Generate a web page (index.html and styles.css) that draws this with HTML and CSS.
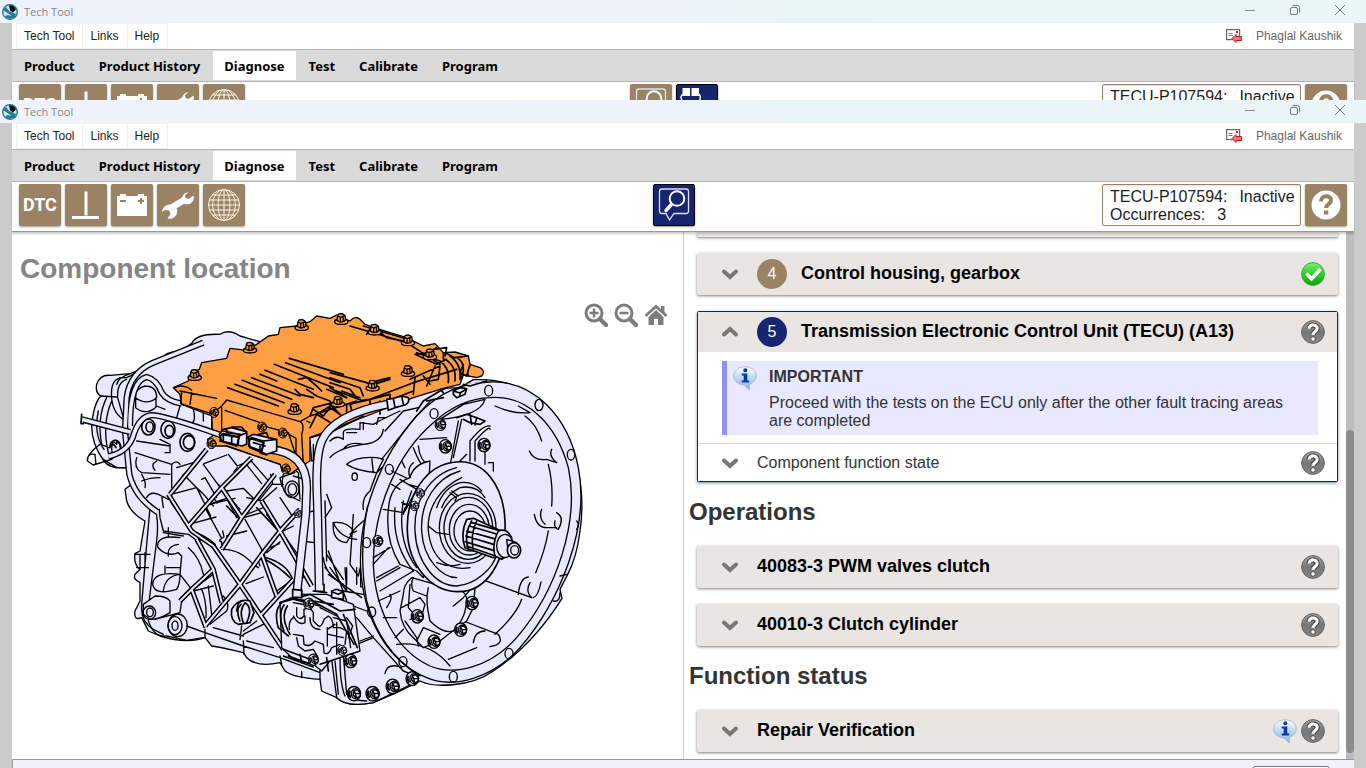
FILE: index.html
```html
<!DOCTYPE html>
<html lang="en">
<head>
<meta charset="utf-8">
<title>Tech Tool</title>
<link rel="stylesheet" href="styles.css">
</head>
<body>
<svg class="defs" aria-hidden="true">
  <defs>
    <linearGradient id="grey" x1="0" y1="0" x2="0" y2="1"><stop offset="0" stop-color="#a4a4a4"/><stop offset=".5" stop-color="#777"/><stop offset="1" stop-color="#858585"/></linearGradient>
    <linearGradient id="green" x1="0" y1="0" x2="0" y2="1"><stop offset="0" stop-color="#7df06a"/><stop offset=".5" stop-color="#2fd02a"/><stop offset="1" stop-color="#12a012"/></linearGradient>
    <linearGradient id="blue" x1="0" y1="0" x2="0" y2="1"><stop offset="0" stop-color="#fdfeff"/><stop offset=".55" stop-color="#b5d2f5"/><stop offset="1" stop-color="#8fb4e4"/></linearGradient>
  </defs>
  <symbol id="logo" viewBox="0 0 16 16"><circle cx="8" cy="8" r="7.3" fill="#cfe3ea" stroke="#1d6f86" stroke-width="1.3"/><path d="M1 6 4 3l3 4 7 3-1 3-5 2-5-2 2-2 5 1-6-4z" fill="#247a92"/><path d="M7 1.5c3-1 6 1 7 4l-3 3-3-2z" fill="#07131c"/></symbol>
  <symbol id="min" viewBox="0 0 12 12"><path d="M1 6.500h10" stroke="#888" fill="none"/></symbol>
  <symbol id="max" viewBox="0 0 12 12"><rect x="1.500" y="3.500" width="7" height="7" rx="1.500" fill="none" stroke="#777"/><path d="M3.500 1.500h5a2 2 0 0 1 2 2v5" fill="none" stroke="#777"/></symbol>
  <symbol id="close" viewBox="0 0 12 12"><path d="m1 1 10 10M11 1 1 11" stroke="#777" fill="none"/></symbol>
  <symbol id="mail" viewBox="0 0 16 14"><rect x=".6" y=".6" width="13" height="10" fill="#fff" stroke="#666" stroke-width="1.200"/><path d="M2.500 4.500h4M2.500 6.500h4" stroke="#777"/><path d="M10 2h2v2h-2z" fill="#c22"/><path d="m6 9.500 4-4v2h5.500v4H10v2z" fill="#ff7070" stroke="#d01818"/></symbol>
  <symbol id="ground" viewBox="0 0 42 42"><path d="M19.500 7.500h3v24h-3zM7 32h27v3H7z" fill="#fff"/></symbol>
  <symbol id="battery" viewBox="0 0 42 42"><path d="M6 12h3v-2h6v2h12v-2h6v2h3v20H6z" fill="#fff"/><path d="M9 17h6M27 17h6M30 14v6" stroke="#9a8265" stroke-width="2"/></symbol>
  <symbol id="wrench" viewBox="0 0 42 42"><path d="M14 24 28 15.500" stroke="#fff" stroke-width="6.500"/><path d="M30 8.500a7 7 0 0 0-5 8l3 3.500a7 7 0 0 0 9-6l-.5-2.500-5 3.500-3-1-.5-3 3.500-2.500zM5 28a8 8 0 0 1 11-7l4 4A8 8 0 0 1 12 35l-1.500-.5 3-4.500-1.500-3.500-4-.5z" fill="#fff"/></symbol>
  <symbol id="globe" viewBox="0 0 42 42"><g fill="none" stroke="#fff3df" stroke-width="1"><circle cx="21" cy="21" r="15.500"/><ellipse cx="21" cy="21" rx="11.500" ry="15.500"/><ellipse cx="21" cy="21" rx="6" ry="15.500"/><path d="M21 5.500v31M5.500 21h31M6.500 16h29M6.500 26h29M9.500 11h23M9.500 31h23"/></g></symbol>
  <symbol id="inspect" viewBox="0 0 42 42"><path d="M9 5h24q2.500 0 2.500 2.500V27q0 2.500-2.500 2.500H21L16.500 36 13 29.500H9Q6.500 29.500 6.500 27V7.500Q6.500 5 9 5z" fill="none" stroke="#dfe1f2" stroke-width="1.300"/><circle cx="24" cy="14.500" r="7.300" fill="none" stroke="#fff" stroke-width="2"/><path d="m18 21-5 5.500" stroke="#fff" stroke-width="3.500" stroke-linecap="round"/></symbol>
  <symbol id="parts" viewBox="0 0 42 42"><path d="M6.500 4H14v8H6.500zM15.500 4H23v8h-7.500z" fill="#fff"/><path d="M7 10q-3 2-1.500 5Q6 20 9 20h12q3 0 3-5 1-3-1-5" fill="none" stroke="#fff" stroke-width="1.500"/></symbol>
  <symbol id="helpbig" viewBox="0 0 42 42"><circle cx="21" cy="21" r="14.500" fill="#fff"/><path d="M16 17.500c0-7 10.500-6.500 10-1 0 4-5 3.500-5 7.500" fill="none" stroke="#9a8265" stroke-width="4"/><path d="M18.800 26.500h4.500v4h-4.500z" fill="#9a8265"/></symbol>
  <symbol id="help" viewBox="0 0 24 24"><circle cx="12" cy="12" r="11.400" fill="url(#grey)" stroke="#666"/><path d="M8 8.800C8 3.500 16.500 4 16.200 8.500 16 11.500 12 11.500 12 15" fill="none" stroke="#333" stroke-width="5"/><path d="M8 8.800C8 3.500 16.500 4 16.200 8.500 16 11.500 12 11.500 12 15" fill="none" stroke="#fff" stroke-width="3.200"/><circle cx="12" cy="19" r="2.200" fill="#fff" stroke="#333" stroke-width=".7"/></symbol>
  <symbol id="ok" viewBox="0 0 24 24"><circle cx="12" cy="12" r="11.400" fill="url(#green)" stroke="#2b9c2b" stroke-width=".8"/><path d="m5.500 11.500 5 5.500 9-10" fill="none" stroke="#fff" stroke-width="3.500"/></symbol>
  <symbol id="info" viewBox="0 0 24 24"><path d="M12 .8c6.500 0 11.300 4 11.300 9 0 4-3 7.200-7 8.400V24l-5-5C5 18.700.7 14.800.7 10 .7 5 5.500.8 12 .8z" fill="url(#blue)" stroke="#9aaabd" stroke-width=".7"/><circle cx="12.300" cy="4.200" r="2" fill="#0b3a9c"/><path d="M8.700 7.500h5.600v7h1.900v2H8.700v-2h2v-5h-2z" fill="#0b3a9c"/></symbol>
  <symbol id="chev" viewBox="0 0 16 16"><path d="m2 5.500 6 5.500 6-5.500" fill="none" stroke="#777" stroke-width="4" stroke-linecap="round"/></symbol>
  <symbol id="zoomin" viewBox="0 0 24 24"><circle cx="10" cy="10" r="8" fill="none" stroke="#7d7d7d" stroke-width="3"/><path d="m16 16 6 6" stroke="#7d7d7d" stroke-width="4.500" stroke-linecap="round"/><path d="M5.500 10h9M10 5.500v9" stroke="#7d7d7d" stroke-width="2.500"/></symbol>
  <symbol id="zoomout" viewBox="0 0 24 24"><circle cx="10" cy="10" r="8" fill="none" stroke="#7d7d7d" stroke-width="3"/><path d="m16 16 6 6" stroke="#7d7d7d" stroke-width="4.500" stroke-linecap="round"/><path d="M5.500 10h9" stroke="#7d7d7d" stroke-width="2.500"/></symbol>
  <symbol id="home" viewBox="0 0 24 24"><path d="M1.500 13 12 3.500 22.500 13" fill="none" stroke="#7d7d7d" stroke-width="2.800"/><path d="M17 3h3.500v7L17 7zM4.500 14 12 7l7.500 7v8H14v-6h-4v6H4.500z" fill="#7d7d7d"/></symbol>
  <symbol id="topbolt" viewBox="-24 -24 48 48"><ellipse cy="10" rx="20" ry="8"/><path d="M-11-8-13 6-4 11 8 9 13 3 11-9 2-14-8-13zM-11-7-3-3 11-8M-3-3v13M5-5l1 13"/></symbol>
  <symbol id="sidebolt" viewBox="-24 -24 48 48"><ellipse cx="-2" rx="18" ry="20"/><ellipse cx="3" rx="12" ry="14"/><path d="m-2-9 10-2 8 9-2 10-9 4-9-8zM-2-9l4 9 14-1M2 0l3 12"/><path d="M-14-6q-4 8 2 15" stroke-width="6"/></symbol>
</svg>

<div class="window window-back">
  <header class="titlebar"><svg class="i16"><use href="#logo"/></svg><span class="app-name">Tech Tool</span>
    <div class="win-buttons"><button type="button" aria-label="Minimize"><svg><use href="#min"/></svg></button><button type="button" aria-label="Restore"><svg><use href="#max"/></svg></button><button type="button" aria-label="Close"><svg><use href="#close"/></svg></button></div></header>
  <div class="frame">
    <nav class="menubar"><button type="button">Tech Tool</button><button type="button">Links</button><button type="button">Help</button><div class="user"><svg><use href="#mail"/></svg><span>Phaglal Kaushik</span></div></nav>
    <nav class="tabs"><a href="#">Product</a><a href="#">Product History</a><a href="#" class="active">Diagnose</a><a href="#">Test</a><a href="#">Calibrate</a><a href="#">Program</a></nav>
    <div class="toolbar">
      <div class="tiles"><button type="button" class="tile dtc">DTC</button><button type="button" class="tile" aria-label="Ground"><svg><use href="#ground"/></svg></button><button type="button" class="tile" aria-label="Battery"><svg><use href="#battery"/></svg></button><button type="button" class="tile" aria-label="Tools"><svg><use href="#wrench"/></svg></button><button type="button" class="tile" aria-label="Web"><svg><use href="#globe"/></svg></button></div>
      <div class="tiles middle"><button type="button" class="tile" aria-label="Inspect"><svg><use href="#inspect"/></svg></button><button type="button" class="tile selected" aria-label="Parts"><svg><use href="#parts"/></svg></button></div>
      <div class="tiles end"><div class="fault"><div><span>TECU-P107594:</span><span>Inactive</span></div><div><span>Occurrences:</span><span>3</span></div></div><button type="button" class="tile" aria-label="Help"><svg><use href="#helpbig"/></svg></button></div>
    </div>
  </div>
</div>

<div class="window window-front">
  <header class="titlebar"><svg class="i16"><use href="#logo"/></svg><span class="app-name">Tech Tool</span>
    <div class="win-buttons"><button type="button" aria-label="Minimize"><svg><use href="#min"/></svg></button><button type="button" aria-label="Restore"><svg><use href="#max"/></svg></button><button type="button" aria-label="Close"><svg><use href="#close"/></svg></button></div></header>
  <div class="frame">
    <nav class="menubar"><button type="button">Tech Tool</button><button type="button">Links</button><button type="button">Help</button><div class="user"><svg><use href="#mail"/></svg><span>Phaglal Kaushik</span></div></nav>
    <nav class="tabs"><a href="#">Product</a><a href="#">Product History</a><a href="#" class="active">Diagnose</a><a href="#">Test</a><a href="#">Calibrate</a><a href="#">Program</a></nav>
    <div class="toolbar">
      <div class="tiles"><button type="button" class="tile dtc">DTC</button><button type="button" class="tile" aria-label="Ground"><svg><use href="#ground"/></svg></button><button type="button" class="tile" aria-label="Battery"><svg><use href="#battery"/></svg></button><button type="button" class="tile" aria-label="Tools"><svg><use href="#wrench"/></svg></button><button type="button" class="tile" aria-label="Web"><svg><use href="#globe"/></svg></button></div>
      <div class="tiles middle"><button type="button" class="tile selected" aria-label="Inspect"><svg><use href="#inspect"/></svg></button></div>
      <div class="tiles end"><div class="fault"><div><span>TECU-P107594:</span><span>Inactive</span></div><div><span>Occurrences:</span><span>3</span></div></div><button type="button" class="tile" aria-label="Help"><svg><use href="#helpbig"/></svg></button></div>
    </div>

    <main class="content">
      <section class="location">
        <h1>Component location</h1>
        <div class="stage">
          <svg class="gearbox" viewBox="0 0 1530 1230" role="img" aria-label="Component location">
            <defs>
              <path id="ribs" d="M380 445 270 580M515 470 425 560 325 675M585 520 485 650 425 745M400 805 335 865 300 900M660 625 600 690 545 760 480 850 375 975M640 835 540 945M265 580 335 690 400 735 480 850 540 940 610 1045M425 560 485 650M545 760 590 885M545 600 600 690 695 855M350 715 400 805 425 905M335 865 378 980"/>
              <path id="harness" d="M5 355 150 393M85 466Q140 455 158 410 175 350 210 343 240 338 430 405"/>
              <path id="loop" d="M370 125 220 185Q150 215 140 290L135 390 148 520Q165 590 235 635M150 375Q150 240 200 228 230 235 245 275 260 300 305 308"/>
              <path id="tubes" d="M570 445Q680 455 680 560L677 640 650 880M930 308Q760 340 725 420 705 470 712 600L718 870"/>
            </defs>
            <g class="ink">
              <path class="body" d="M50 250Q60 220 90 223L150 218 205 198 245 175Q255 150 300 152L335 127Q350 97 420 100 445 82 480 105L550 125 900 270 1140 260 1180 236Q1320 230 1405 322C1485 410 1520 560 1500 690Q1490 770 1463 820L1440 865 1446 892Q1360 1030 1240 1110C1170 1160 1060 1160 1020 1140L950 1175 880 1205Q800 1220 770 1190L725 1170 720 1135Q640 1130 615 1110L600 1085Q530 1100 500 1070L490 1055Q430 1040 395 1035L375 1010Q320 1030 240 1005L205 990 185 950Q160 960 165 930L180 900V845Q158 835 165 820L180 805Q160 790 165 758L180 750 195 660Q150 635 140 600L135 565 155 550 140 500Q90 505 72 480 35 430 35 375 40 310 62 285 45 275 50 250Z"/>
              <path d="M150 218Q115 230 110 250M62 285 110 288M95 265Q100 225 140 230L165 218M95 265Q90 330 130 355M140 235Q110 245 113 290L130 350M55 330Q40 400 72 445M80 290Q50 350 65 430M95 300Q65 370 85 455M70 475 110 500H140M110 430Q90 410 90 440L60 430Q20 460 22 480L40 492 95 475 120 450Q125 430 110 420ZM22 480Q22 455 45 460L48 490M100 420Q90 450 100 460"/>
              <path class="heavy" d="M95 425Q105 410 118 425 128 440 115 455M88 440Q98 420 108 440"/>
              <path d="M195 255Q165 262 167 290 200 315 230 290 230 255 195 255M167 290V320Q200 345 228 318V290M230 315 255 325M300 315 290 350M340 325Q350 365 330 370M370 335V360M170 420 270 435M165 455 275 490M170 470Q160 500 185 515L270 520M185 520Q200 545 195 560M185 540Q210 530 240 530M275 490V560M240 415 270 430V455H255M200 590Q210 570 235 580L265 595M230 480Q210 490 225 508M245 585 250 620"/>
              <g class="heavy"><ellipse cx="205" cy="378" rx="20" ry="24"/><ellipse cx="209" cy="378" rx="11" ry="15"/><ellipse cx="264" cy="386" rx="21" ry="26"/><ellipse cx="268" cy="390" rx="13" ry="17"/><ellipse cx="322" cy="424" rx="22" ry="27"/><ellipse cx="327" cy="424" rx="17" ry="20"/></g>
              <path d="M210 620 200 730 185 910Q180 960 220 985L250 1000M222 620Q238 650 230 720L208 895M238 625 240 650 250 690 325 700 345 715 390 722 415 750M195 755V800M180 760V805M165 760H210M170 800H205M265 680V705M250 695 310 705M300 710Q230 700 233 738 260 770 295 755M295 730Q260 735 265 765M300 820Q220 810 218 850 225 885 290 865 300 850 300 820M300 820Q255 825 250 870M255 795V815M260 800H300M295 755 305 765 300 820 335 865 305 900 300 935Q280 940 270 955M190 910 225 885Q260 885 270 900V935Q240 955 210 955L190 940ZM225 955 300 935M325 740Q360 770 370 820M345 860 400 820 430 900M385 855 395 940M365 865Q380 900 378 950M340 870 400 855M430 885Q450 910 440 930L390 970"/>
              <g><ellipse cx="208" cy="935" rx="19" ry="20"/><ellipse cx="210" cy="934" rx="10" ry="13"/><ellipse cx="293" cy="973" rx="29" ry="34"/><ellipse cx="285" cy="974" rx="21" ry="27"/><ellipse cx="285" cy="974" rx="9" ry="14"/></g>
              <path d="M205 958Q220 1010 260 1005L320 1018 370 1010M320 975 375 995 490 1035 600 1070 720 1115M375 985V1010M490 1020 492 1060M600 1065 605 1090M400 980 490 1005M500 1020 580 1040M610 1065 700 1098M665 1112V1130M720 1070V1135M610 1045 660 990M490 1000 550 970M490 990 530 960M485 975 480 1015"/>
              <path d="M275 490Q290 475 300 490M290 500 340 485M372 488 440 462M370 490 418 556M310 520 365 575M310 520 300 540M282 578 350 560 392 645M350 560Q372 578 400 615M365 535 375 530 410 590M410 545 480 625M440 570 490 562 520 592M445 460 472 495 512 478M472 500 462 512M512 478 570 545M495 485 545 548M440 590 470 632M400 605 440 592 470 650M385 608 400 590 412 606M500 640 550 620M590 560 545 600M572 520 578 548 540 595M580 550H610M335 668 408 648M378 612 465 592M375 620 425 712M440 705 500 690M425 745V722Q410 720 432 708L428 690M430 745Q480 745 520 790L535 800M495 655 545 745M490 650 545 635M560 640 595 690M500 590 545 600M545 748 555 765M548 750 598 728M540 795Q530 770 545 762M498 848 550 828M550 768Q620 785 638 835M600 695 640 675M610 700 660 770M600 590 640 650M605 555 600 530 645 515M560 755 600 722M410 755 450 800 480 845M590 870 640 835"/>
              <path class="heavy" d="M272 602 335 690Q380 705 405 730M555 775 Q600 800 630 830M440 615 480 655M530 620 600 695"/>
            </g>
            <use href="#ribs" class="rib-edge"/><use href="#ribs" class="rib-fill"/>
            <g class="ink">
              <path class="body heavy" d="M455 925Q475 890 510 900L522 935 510 965 475 970Q450 960 455 925ZM470 930Q472 900 490 900M480 960Q465 925 483 910M490 965Q475 930 495 905 520 920 500 965"/>
              <path d="M600 490Q640 500 655 515L660 595M610 520Q600 560 620 580L660 600"/><ellipse cx="636" cy="565" rx="21" ry="25"/><ellipse cx="637" cy="565" rx="13" ry="17"/>
              <path d="M690 420 695 480 720 475M700 430V480M710 430V475M720 425V465M640 525 690 540M760 665Q755 720 800 725L820 690Q800 660 760 665M740 580 755 620 735 650M740 760 790 835M730 770Q735 820 790 850M735 600 740 780M660 640 700 630M660 720 705 725M670 780V830M735 800 760 830M745 750 800 900M800 800V850M820 640 810 790 835 825 880 630M795 800 800 870M750 800 800 870"/>
              <path d="M750 470Q775 440 850 430 905 425 910 385M750 420Q770 400 790 415V395Q790 380 840 385V365L880 370Q905 355 960 330M800 395H830M850 385V365M890 370 895 350H920M790 445Q805 420 850 430M800 490Q830 465 890 470L910 475 890 515Q830 510 800 490ZM890 515 905 500M875 470 880 515M890 515 870 570Q845 590 850 625M900 525 862 620M915 390 970 330 1015 320M905 475 1005 350 1060 290"/><ellipse cx="824" cy="527" rx="8" ry="11"/>
              <path d="M760 665Q780 710 830 715M850 660Q825 680 810 700L830 690M830 800V850M850 810V860L842 857V810"/>
              <path class="body" d="M1230 243C1360 238 1465 345 1495 500 1530 680 1440 900 1320 1040 1240 1130 1120 1165 1040 1130 930 1085 850 960 842 800 835 640 900 470 1010 345 1080 270 1150 245 1230 243Z"/>
              <path d="M1230 290C1340 280 1430 370 1465 500 1500 660 1430 870 1310 1010 1230 1100 1120 1125 1050 1095 950 1050 885 930 880 790 880 610 960 450 1060 365 1110 320 1170 292 1230 290M1080 355 1150 310 1215 295Q1200 345 1080 355M862 620Q835 760 860 900 900 1050 1020 1125"/>
              <g><ellipse cx="1226" cy="269" rx="12" ry="16"/><ellipse cx="1377" cy="312" rx="12" ry="17"/><ellipse cx="1473" cy="461" rx="11" ry="16"/><ellipse cx="1062" cy="338" rx="12" ry="15"/><ellipse cx="928" cy="505" rx="12" ry="15"/><ellipse cx="860" cy="725" rx="12" ry="15"/><ellipse cx="875" cy="933" rx="12" ry="15"/><ellipse cx="969" cy="1082" rx="12" ry="15"/><ellipse cx="1120" cy="1127" rx="12" ry="16"/><ellipse cx="1287" cy="1058" rx="12" ry="16"/></g>
              <path d="M1245 315Q1300 340 1350 335M1315 315 1350 335M1335 345Q1370 370 1385 420M1348 450Q1360 480 1400 475L1430 485M1415 445Q1405 465 1430 485M1405 490Q1420 550 1415 615M1363 640Q1370 680 1400 680H1430M1385 625Q1375 650 1395 670M1430 635Q1455 650 1435 685 1420 680 1425 660M1405 690Q1395 750 1367 815M1315 880Q1320 830 1345 828M1360 890Q1375 885 1383 843M1350 845Q1335 870 1355 890L1205 835M1325 895Q1310 940 1245 1000M1490 660Q1500 670 1490 685M1460 820 1440 825M1420 900Q1440 905 1440 875M1105 1075 1190 1040M950 1030Q1050 1020 1110 1095M1150 960 1255 1000Q1275 1030 1230 1037M1180 1025Q1185 990 1215 990M900 870 1000 810M890 830 955 795M890 840 960 800M895 900 960 870M880 790 925 740M880 770 930 740M910 950H950M945 1010 970 985M920 920Q940 890 930 880M1000 440Q1020 490 1030 495M1015 435Q1020 480 1045 490M1020 415 1100 410M1110 495 1135 360M1120 470 1145 355M1170 480V420Q1210 370 1230 375M1185 480V420Q1230 370 1230 385M1215 490V445M1225 485H1240V510M1140 480 1160 460M965 480 975 500M935 510 1020 550"/>
              <path class="body" d="M925 625Q915 720 960 790L1010 810 1030 830 1050 480Q1000 490 990 530 930 550 925 625Z"/>
              <path d="M945 620Q935 730 1000 810M970 600Q950 720 1010 800M1000 485Q980 500 990 530M960 535 1010 565 975 630M985 550 1020 560M935 550 960 565M995 570 970 640M910 625 970 635 975 620M965 605 1005 620"/>
              <path class="body" d="M995 830Q970 850 970 880L960 930Q965 980 1000 1010L1030 1040 1080 1020Q1130 980 1160 960L1180 920 1185 860 1210 840 1220 795 1100 860Z"/>
              <path d="M1000 830Q990 850 1000 870L1040 885M990 850 985 920 1020 960M965 920 1020 890 1035 910 1025 945 990 955M975 960 1010 1010 1015 1035M1010 1020 1030 980 1080 1000M1045 860Q1035 900 1050 960 1090 1000 1120 990 1160 950 1160 890 1150 860 1120 870M1120 915 1150 890 1185 850"/>
              <g class="heavy"><path class="body" d="M1128 483C1210 475 1270 550 1275 660 1280 780 1220 875 1130 872 1050 870 985 790 982 690 978 580 1040 490 1128 483Z"/></g>
              <path d="M1130 500C1050 520 1000 600 1005 690 1010 790 1070 855 1130 855 1190 850 1240 800 1250 760M1140 510C1070 530 1020 600 1025 690 1030 780 1090 830 1130 830M1145 530C1080 560 1040 620 1045 690 1055 780 1110 810 1170 800M1045 675 1070 695 1105 700M1205 570Q1180 540 1140 545 1090 560 1070 620M1215 590Q1190 550 1140 560 1100 580 1085 620M1110 575 1130 590 1125 600M1115 570 1135 585"/>
              <ellipse cx="1163" cy="682" rx="85" ry="105"/><ellipse cx="1165" cy="682" rx="73" ry="93"/><ellipse cx="1168" cy="686" rx="60" ry="76"/><ellipse cx="1170" cy="690" rx="48" ry="60"/><path d="M1070 785Q1110 800 1140 790"/>
              <path class="body heavy" d="M1160 655Q1140 700 1155 740L1240 770Q1265 765 1275 750L1285 700 1180 652Z"/>
              <path class="heavy" d="M1175 665 1280 695M1168 675 1270 705M1160 690 1250 715M1158 705 1240 730M1155 722 1240 748M1160 735 1240 763M1175 660Q1150 700 1165 745M1190 660Q1170 700 1180 750"/>
              <path class="body heavy" d="M1255 690Q1235 730 1245 765L1265 775Q1290 760 1290 745L1295 710Q1280 680 1255 690Z"/>
              <ellipse class="body" cx="1275" cy="735" rx="25" ry="35"/><path class="body" d="M1280 715 1310 725V770L1285 760Z"/><ellipse class="body heavy" cx="1302" cy="748" rx="20" ry="23"/><ellipse cx="1304" cy="748" rx="12" ry="14"/>
              <path class="body" d="M755 1075 770 1190Q800 1220 880 1205L1015 1140Q1000 1120 970 1110L880 1010 830 1030 780 1060Z"/>
              <path d="M765 1080 775 1180M780 1070Q780 1150 795 1185M790 1060 800 1180Q820 1200 860 1200M915 1118Q920 1090 950 1095L965 1100M840 1020 880 1005M750 930 830 950 880 1010M745 820 845 890M780 900 860 930M790 870 850 880"/>
              <path class="body" d="M600 905 660 880 740 880 820 910 840 1050 750 1080 725 1110 700 1090 640 1075 605 1040Z"/>
              <path class="heavy" d="M605 905Q580 930 595 980L625 1005M612 912Q592 940 612 990M622 915Q600 950 630 1000M600 905 690 880 780 930 825 925M630 892 700 902 770 940 822 1030M700 900 760 910M790 940 832 1040M740 1070 745 1110M720 1090 750 1080M640 890V870L665 865V890M700 870 740 875M660 1060 665 1085M610 1045 690 1075M625 1065 700 1092"/>
              <path d="M650 920V945Q660 960 672 945V925Q690 915 700 935V960L715 975Q725 980 732 955L745 945Q760 955 760 980H780M640 945Q655 975 675 965V945M690 950Q690 985 720 985M640 1000 670 1005 672 1030Q690 1040 705 1020L730 1030 732 1055Q745 1065 755 1040L780 1030M650 1010 655 1035 675 1050 700 1045 712 1065M742 980V1035M770 965V1060M742 985 765 970M760 950 800 960 812 1040M800 950 818 975 805 1010M780 980 800 990 795 1030M640 950Q625 960 628 985M745 1000 790 1010M640 905 680 912M720 920 770 945M640 895 720 915"/>
              <path class="body heavy" d="M755 890V870L770 865 790 872V895ZM755 872 775 880 790 872"/>
            </g>
            <use href="#loop" class="pipe-edge"/><use href="#loop" class="pipe-fill"/>
            <g class="ink">
              <path class="orange" d="M280 260 325 240 332 215 358 205 365 185 440 172 450 142 500 148 530 130 565 105 595 100 600 80 650 75 690 62 710 45 750 52 770 42 810 60Q825 42 840 55L855 70 890 82 930 95 980 110 1030 135 1065 128 1090 155 1125 153 1165 165 1170 190 1200 200Q1218 210 1205 225L1190 230 1150 222 1140 250 1090 262 1000 290 860 345 690 410V480L665 495 630 520 605 505 600 490 440 435 385 435 383 415 398 405 395 345 305 310 300 280Z"/>
              <path d="M300 270 410 292M305 275 302 308 400 340M335 275 330 310M285 260Q300 250 325 260L335 268M395 340 425 315 440 297M425 320V400M435 328 540 365M440 297 660 362 690 345 830 300M395 345V400M660 362Q675 370 665 400L670 490M690 365 680 360M550 375 625 395 650 470M610 390 648 412V480M600 460 650 480M440 435 600 490M690 410 750 390"/>
              <path class="heavy" d="M443 260 595 315M465 250 612 305M487 238 635 295M515 230 660 285M540 220 590 240M555 208 700 265M583 190 760 260M617 185 780 245M628 172 790 220M655 235 680 230 710 255 725 270M680 265 710 285 750 300 760 320M645 265 660 280 700 290M740 265 800 290M770 270 850 300"/>
              <path class="heavy" d="M690 410 760 390 850 345M690 345 700 320 760 305M690 380 710 340 760 370M710 340 760 310M700 325 730 345 750 320 800 355V310M750 310 790 350M770 365 820 345 810 310 860 295M830 335 870 320V295L1000 245 1130 205M870 320 1000 270M830 305 930 280V310M900 340V300M750 215 860 245 880 260M750 230 840 260 850 285M750 245 810 265 830 290M750 260 800 290M785 270 840 290M870 245 930 230M880 250 930 235"/>
              <path class="heavy" d="M810 75 980 125 1080 190M850 75 1000 120M870 85 860 100M895 90 920 110 970 120M1005 160 1070 190 1100 175M1005 160 1050 155 1070 140M1010 155 1080 180M990 235 1080 195 1075 235 1050 240M1005 230 1000 280M1030 225 1050 250M1065 195 1040 255M1080 180Q1110 200 1105 245M1095 175Q1130 195 1125 240M1110 165Q1145 190 1140 235M1130 170Q1160 185 1145 230M1095 155 1125 170 1165 165M1150 190 1140 215 1160 225 1170 190M1170 195Q1160 215 1165 225M1090 155V175M1060 145 1100 140 1095 165"/>
              <g class="orange"><use href="#topbolt" x="320" y="196" width="48" height="48"/><use href="#topbolt" x="486" y="114" width="48" height="48"/><use href="#topbolt" x="641" y="46" width="48" height="48"/><use href="#topbolt" x="760" y="28" width="48" height="48"/><use href="#topbolt" x="860" y="60" width="48" height="48"/><use href="#topbolt" x="960" y="92" width="48" height="48"/><use href="#topbolt" x="1026" y="134" width="48" height="48"/><use href="#topbolt" x="960" y="184" width="48" height="48"/><use href="#topbolt" x="854" y="228" width="48" height="48"/><use href="#topbolt" x="750" y="276" width="48" height="48"/><use href="#topbolt" x="620" y="298" width="48" height="48"/><use href="#sidebolt" x="386" y="316" width="36" height="36"/><use href="#sidebolt" x="530" y="360" width="36" height="36"/><use href="#sidebolt" x="592" y="378" width="36" height="36"/><use href="#sidebolt" x="378" y="410" width="36" height="36"/><use href="#sidebolt" x="601" y="486" width="36" height="36"/></g>
            </g>
            <use href="#tubes" class="tube-edge"/><use href="#tubes" class="tube-fill"/>
            <use href="#harness" class="pipe-edge"/><use href="#harness" class="pipe-fill"/>
            <g class="ink">
              <path class="body heavy" d="M418 400 430 385 455 380 500 392V430L485 435 425 420ZM430 390 475 400V432M425 400 470 408 500 395M440 385V395L480 400M505 408 520 400 590 415V450L560 460 510 440ZM515 410 550 420 545 458M550 420 590 415M520 425 555 435M430 405V420M455 405V425"/>
              <path class="heavy" d="M422 405 420 420 470 435 478 408 430 398ZM510 412 506 436 545 450 552 425ZM455 378H485L495 390M535 400 560 395 565 410M540 435V455L560 462"/>
              <path class="body heavy" d="M920 295 940 292 945 320 925 328ZM940 292 965 285 985 290Q990 305 975 312L945 320M965 285 970 310M638 865 665 868V890L638 888ZM705 870 732 872V850M5 340 3 368 10 368"/>
              <path class="body heavy" d="M1120 270 1140 260 1160 263 1155 280 1130 290 1120 280ZM1120 270 1140 276 1158 265M1140 276V285M1150 250 1170 255 1220 240M1010 330 1030 300 1080 270 1100 260M1040 300 1090 290M1080 265 1090 275"/>
              <path class="heavy" d="M1130 350 1160 340 1190 350 1215 360 1200 370 1170 365 1150 355M1170 340 1175 370M1190 350 1185 372"/>
              <g class="body"><use href="#sidebolt" x="1062" y="350" width="42" height="42"/><use href="#sidebolt" x="1074" y="412" width="48" height="48"/><use href="#sidebolt" x="1190" y="408" width="48" height="48"/><use href="#sidebolt" x="1005" y="560" width="34" height="34"/><use href="#sidebolt" x="988" y="598" width="34" height="34"/><use href="#sidebolt" x="875" y="700" width="40" height="40"/><use href="#sidebolt" x="990" y="922" width="48" height="48"/><use href="#sidebolt" x="1154" y="882" width="48" height="48"/><use href="#sidebolt" x="1120" y="962" width="48" height="48"/><use href="#sidebolt" x="1040" y="998" width="48" height="48"/><use href="#sidebolt" x="790" y="1056" width="48" height="48"/><use href="#sidebolt" x="798" y="1152" width="52" height="52"/><use href="#sidebolt" x="854" y="1152" width="52" height="52"/><use href="#sidebolt" x="914" y="1130" width="52" height="52"/><use href="#sidebolt" x="974" y="1108" width="50" height="50"/><use href="#sidebolt" x="668" y="888" width="40" height="40"/><use href="#sidebolt" x="682" y="1056" width="40" height="40"/><use href="#sidebolt" x="640" y="625" width="28" height="28"/><use href="#sidebolt" x="770" y="1030" width="36" height="36"/></g>
            </g>
          </svg>
          <div class="view-tools"><button type="button" aria-label="Zoom in"><svg><use href="#zoomin"/></svg></button><button type="button" aria-label="Zoom out"><svg><use href="#zoomout"/></svg></button><button type="button" aria-label="Home"><svg><use href="#home"/></svg></button></div>
        </div>
      </section>

      <section class="panel">
        <div class="list">
          <article class="card peek"></article>
          <article class="card"><div class="row"><button type="button" class="toggle" aria-label="Expand"><svg><use href="#chev"/></svg></button><span class="step">4</span><h3>Control housing, gearbox</h3><svg class="i24"><use href="#ok"/></svg></div></article>
          <article class="card open">
            <div class="row"><button type="button" class="toggle up" aria-label="Collapse"><svg><use href="#chev"/></svg></button><span class="step current">5</span><h3>Transmission Electronic Control Unit (TECU) (A13)</h3><button type="button" class="round" aria-label="Help"><svg><use href="#help"/></svg></button></div>
            <div class="note"><svg class="i24"><use href="#info"/></svg><div><strong>IMPORTANT</strong><p>Proceed with the tests on the ECU only after the other fault tracing areas are completed</p></div></div>
            <div class="row sub"><button type="button" class="toggle" aria-label="Expand"><svg><use href="#chev"/></svg></button><h4>Component function state</h4><button type="button" class="round" aria-label="Help"><svg><use href="#help"/></svg></button></div>
          </article>
          <h2>Operations</h2>
          <article class="card"><div class="row"><button type="button" class="toggle" aria-label="Expand"><svg><use href="#chev"/></svg></button><h3>40083-3 PWM valves clutch</h3><button type="button" class="round" aria-label="Help"><svg><use href="#help"/></svg></button></div></article>
          <article class="card"><div class="row"><button type="button" class="toggle" aria-label="Expand"><svg><use href="#chev"/></svg></button><h3>40010-3 Clutch cylinder</h3><button type="button" class="round" aria-label="Help"><svg><use href="#help"/></svg></button></div></article>
          <h2>Function status</h2>
          <article class="card"><div class="row"><button type="button" class="toggle" aria-label="Expand"><svg><use href="#chev"/></svg></button><h3>Repair Verification</h3><button type="button" class="round" aria-label="Information"><svg><use href="#info"/></svg></button><button type="button" class="round" aria-label="Help"><svg><use href="#help"/></svg></button></div></article>
        </div>
        <div class="scrollbar"><div class="thumb"></div></div>
      </section>
    </main>
    <footer class="footer"><button type="button"></button></footer>
  </div>
</div>
</body>
</html>
```

FILE: styles.css
```css
* { box-sizing: border-box; }
body {
  margin: 0;
  height: 100vh;
  display: flex;
  flex-direction: column;
  overflow: hidden;
  background: #cbcbcb;
  font-family: "Liberation Sans", Arial, sans-serif;
  color: #333;
}
button { border: 0; padding: 0; background: none; font: inherit; color: inherit; }
svg { display: block; }
h1, h2, h3, h4, p { margin: 0; }
.defs { position: absolute; width: 0; height: 0; }

.window { display: flex; flex-direction: column; overflow: hidden; }
.window-back { flex: none; height: 100px; }
.window-front { flex: 1; min-height: 0; }
.titlebar {
  flex: none;
  display: flex;
  align-items: center;
  gap: 6px;
  height: 23px;
  padding: 0 20px 0 2px;
  background: linear-gradient(90deg, #eff2fa, #edf3fa 45%, #e8f4f8 60%, #e9f5f8);
}
.i16 { width: 16px; height: 16px; }
.i24 { flex: none; width: 24px; height: 24px; }
.app-name { font: 11px "Open Sans", "Noto Sans", sans-serif; color: #868686; }
.win-buttons { margin-left: auto; display: flex; gap: 33px; padding-bottom: 3px; }
.win-buttons svg { width: 12px; height: 12px; }

.frame {
  flex: 1;
  min-height: 0;
  display: flex;
  flex-direction: column;
  margin: 0 12px;
  background: #fff;
}
.menubar {
  flex: none;
  display: flex;
  align-items: flex-start;
  height: 27px;
  padding-left: 4px;
  border-bottom: 1px solid #b4b4b4;
  font-size: 12px;
  color: #222;
}
.menubar > button { height: 26px; padding: 0 8px 0 7px; border: 1px solid #f0f0f4; border-left: 0; }
.menubar > button:first-child { border-left: 1px solid #f0f0f4; }
.user { display: flex; align-items: center; gap: 14px; height: 26px; margin-left: auto; padding-right: 12px; color: #666; }
.user svg { width: 16px; height: 14px; }
.tabs {
  flex: none;
  display: flex;
  gap: 2px;
  height: 32px;
  padding: 1px 0 0 2px;
  background: #dadada;
  border-bottom: 1px solid #b4b4b4;
  font: bold 13px "Noto Sans", "Open Sans", sans-serif;
}
.tabs a { height: 29px; padding: 0 11px; line-height: 30px; color: #000; text-decoration: none; }
.tabs a:first-child { padding-left: 10px; }
.tabs .active { background: #fff; }
.toolbar {
  position: relative;
  z-index: 1;
  flex: none;
  display: grid;
  grid-template-columns: 1fr auto 1fr;
  height: 50px;
  padding: 2px 7px;
  background: #fff;
  border-bottom: 1px solid #999;
  box-shadow: 0 2px 2px rgba(0, 0, 0, .2);
}
.tiles { display: flex; gap: 4px; }
.middle { padding-right: 18px; }
.end { justify-content: flex-end; }
.tile {
  width: 42px;
  height: 42px;
  border-radius: 2px;
  background: #9a8265;
  box-shadow: 0 1px 2px rgba(0, 0, 0, .4);
}
.tile svg { width: 42px; height: 42px; }
.dtc { font: bold 18px/42px Roboto, "Liberation Sans", sans-serif; color: #fff; text-align: center; }
.selected { background: #18246e; border: 1px solid #000; }
.selected svg { margin: -1px; }
.fault {
  height: 42px;
  width: 199px;
  padding: 3px 0 0 7px;
  border: 1px solid #9a8265;
  border-radius: 2px;
  box-shadow: inset 0 1px 2px #ddd;
  font-size: 16px;
  line-height: 18px;
  color: #1c1c1c;
}
.fault div { display: flex; gap: 12px; }

.content { flex: 1; min-height: 0; display: grid; grid-template-columns: 50% 50%; }
.location { min-width: 0; padding: 21px 13px 0 8px; }
.location h1 { font-size: 28px; line-height: 32px; color: #858585; }
.stage { position: relative; padding: 16px 80px 0 60px; }
.gearbox { width: 100%; height: auto; }
.view-tools { position: absolute; top: 18px; right: 2px; display: flex; gap: 6px; }
.view-tools svg { width: 24px; height: 24px; }

.ink { stroke: #000; stroke-width: 4; fill: none; stroke-linejoin: round; stroke-linecap: round; }
.heavy { stroke-width: 5; }
.body { fill: #e8e8ff; }
.orange { fill: #ff9f45; }
.rib-edge, .rib-fill, .pipe-edge, .pipe-fill, .tube-edge, .tube-fill { fill: none; stroke: #000; stroke-linejoin: round; }
.rib-edge { stroke-width: 15; }
.rib-fill { stroke-width: 6; stroke: #e8e8ff; }
.pipe-edge { stroke-width: 19; }
.pipe-fill { stroke-width: 11; stroke: #e8e8ff; }
.tube-edge { stroke-width: 27; }
.tube-fill { stroke-width: 19; stroke: #e8e8ff; }

.panel { display: flex; min-width: 0; min-height: 0; border-left: 1px solid #ccc; }
.list { flex: 1; min-width: 0; overflow: hidden; padding: 0 8px 0 5px; }
.card {
  margin: 0 0 16px 8px;
  background: #e8e5e2;
  border-radius: 2px;
  box-shadow: 0 1px 3px rgba(0, 0, 0, .5);
}
.peek { height: 5px; }
.row { display: flex; align-items: center; height: 42px; padding: 0 13px 0 25px; }
.toggle { flex: none; width: 16px; height: 16px; margin-right: 19px; }
.toggle svg { width: 16px; height: 16px; }
.up { transform: rotate(180deg); }
.step {
  flex: none;
  width: 30px;
  height: 30px;
  margin-right: 14px;
  border-radius: 50%;
  background: #9a8265;
  color: #fff;
  font-size: 16px;
  line-height: 30px;
  text-align: center;
}
.current { background: #18246e; }
.row h3 { flex: 1; font-size: 18px; line-height: 20px; padding-bottom: 2px; color: #000; }
.row h4 { flex: 1; font-size: 16px; line-height: 18px; font-weight: normal; color: #333; }
.round { width: 24px; height: 24px; margin-left: 4px; }
.round svg { width: 24px; height: 24px; }
.open { border: 1px solid #0a2a6a; background: #fff; }
.open .row { height: 40px; padding: 0 12px 0 24px; background: #e8e5e2; }
.open .sub { height: 38px; background: #fff; border-top: 1px solid #d5d5d5; }
.note {
  display: flex;
  gap: 12px;
  margin: 9px 19px 8px 24px;
  padding: 5px 20px 5px 6px;
  border-left: 5px solid #9090f8;
  background: #e8e8ff;
  font-size: 16px;
  line-height: 18px;
}
.note strong { display: block; padding: 2px 0 8px; }
.list h2 { margin: 0 0 20px; font-size: 24px; line-height: 28px; color: #333; }
.scrollbar { flex: none; width: 8px; padding-bottom: 6px; display: flex; align-items: flex-end; background: #bdbdbd; }
.thumb { width: 8px; height: 62%; border-radius: 4px; background: #8c8c8c; }
.footer { flex: none; height: 9px; padding: 6px 24px 0 0; overflow: hidden; display: flex; justify-content: flex-end; background: #f2f2f6; border-top: 1px solid #999; border-left: 1px solid #999; }
.footer button { flex: none; width: 78px; height: 24px; border: 1px solid #777; border-radius: 3px; background: #fdfdfd; }
```
